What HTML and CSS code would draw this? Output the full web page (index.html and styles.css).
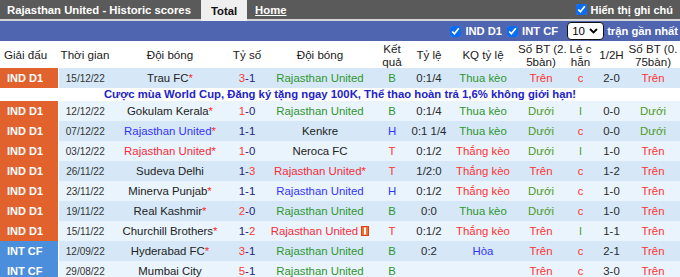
FILE: index.html
```html
<!DOCTYPE html>
<html lang="vi">
<head>
<meta charset="utf-8">
<title>Rajasthan United - Historic scores</title>
<link rel="stylesheet" href="styles.css">
</head>
<body>
<div class="topbar">
  <span class="title">Rajasthan United - Historic scores</span>
  <span class="tab tab-active">Total</span>
  <a class="tab tab-link" href="#">Home</a>
  <label class="note-toggle"><input class="chk" type="checkbox" checked>Hiển thị ghi chú</label>
</div>
<div class="filterbar">
  <label class="filter"><input class="chk" type="checkbox" checked>IND D1</label>
  <label class="filter"><input class="chk" type="checkbox" checked>INT CF</label>
  <span class="select-wrap">
    <select class="count"><option>10</option><option>20</option></select>
    <svg class="chevron" width="9" height="6" viewBox="0 0 9 6"><path d="M1 1 L4.5 4.5 L8 1" fill="none" stroke="#000" stroke-width="1.8"/></svg>
  </span>
  <span class="filter-text">trận gần nhất</span>
</div>
<table class="scores">
  <colgroup>
    <col class="w-league"><col class="w-date"><col class="w-home"><col class="w-score"><col class="w-away"><col class="w-res"><col class="w-odds"><col class="w-oddres"><col class="w-ou"><col class="w-oe"><col class="w-half"><col class="w-ou2">
  </colgroup>
  <thead>
    <tr>
      <th class="th-league">Giải đấu</th>
      <th>Thời gian</th>
      <th>Đội bóng</th>
      <th>Tỷ số</th>
      <th>Đội bóng</th>
      <th>Kết<br>quả</th>
      <th>Tỷ lệ</th>
      <th>KQ tỷ lệ</th>
      <th>Số BT (2.<br>5bàn)</th>
      <th>Lẻ c<br>hẵn</th>
      <th>1/2H</th>
      <th>Số BT (0.<br>75bàn)</th>
    </tr>
  </thead>
  <tbody>
    <tr class="row-a">
      <td class="lg ind">IND D1</td><td class="date">15/12/22</td>
      <td class="team">Trau FC<span class="star">*</span></td>
      <td class="score"><span class="win">3</span><span class="lose">-1</span></td>
      <td class="team green">Rajasthan United</td>
      <td class="green">B</td><td class="odds">0:1/4</td><td class="green">Thua kèo</td>
      <td class="red">Trên</td><td class="red">c</td><td class="half">2-0</td><td class="red">Trên</td>
    </tr>
    <tr class="ad">
      <td colspan="12"><a href="#">Cược mùa World Cup, Đăng ký tặng ngay 100K, Thể thao hoàn trả 1,6% không giới hạn!</a></td>
    </tr>
    <tr class="row-b">
      <td class="lg ind">IND D1</td><td class="date">12/12/22</td>
      <td class="team">Gokulam Kerala<span class="star">*</span></td>
      <td class="score"><span class="win">1</span><span class="lose">-0</span></td>
      <td class="team green">Rajasthan United</td>
      <td class="green">B</td><td class="odds">0:1/4</td><td class="green">Thua kèo</td>
      <td class="olive">Dưới</td><td class="olive">l</td><td class="half">0-0</td><td class="olive">Dưới</td>
    </tr>
    <tr class="row-a">
      <td class="lg ind">IND D1</td><td class="date">07/12/22</td>
      <td class="team blue">Rajasthan United<span class="star">*</span></td>
      <td class="score"><span class="lose">1-1</span></td>
      <td class="team">Kenkre</td>
      <td class="blue">H</td><td class="odds">0:1 1/4</td><td class="green">Thua kèo</td>
      <td class="olive">Dưới</td><td class="red">c</td><td class="half">0-0</td><td class="olive">Dưới</td>
    </tr>
    <tr class="row-b">
      <td class="lg ind">IND D1</td><td class="date">03/12/22</td>
      <td class="team red">Rajasthan United<span class="star">*</span></td>
      <td class="score"><span class="win">1</span><span class="lose">-0</span></td>
      <td class="team">Neroca FC</td>
      <td class="red">T</td><td class="odds">0:1/2</td><td class="red">Thắng kèo</td>
      <td class="olive">Dưới</td><td class="olive">l</td><td class="half">1-0</td><td class="red">Trên</td>
    </tr>
    <tr class="row-a">
      <td class="lg ind">IND D1</td><td class="date">26/11/22</td>
      <td class="team">Sudeva Delhi</td>
      <td class="score"><span class="lose">1-</span><span class="win">3</span></td>
      <td class="team red">Rajasthan United<span class="star">*</span></td>
      <td class="red">T</td><td class="odds">1/2:0</td><td class="red">Thắng kèo</td>
      <td class="red">Trên</td><td class="red">c</td><td class="half">1-2</td><td class="red">Trên</td>
    </tr>
    <tr class="row-b">
      <td class="lg ind">IND D1</td><td class="date">23/11/22</td>
      <td class="team">Minerva Punjab<span class="star">*</span></td>
      <td class="score"><span class="lose">1-1</span></td>
      <td class="team blue">Rajasthan United</td>
      <td class="blue">H</td><td class="odds">0:1/2</td><td class="red">Thắng kèo</td>
      <td class="olive">Dưới</td><td class="red">c</td><td class="half">1-0</td><td class="red">Trên</td>
    </tr>
    <tr class="row-a">
      <td class="lg ind">IND D1</td><td class="date">19/11/22</td>
      <td class="team">Real Kashmir<span class="star">*</span></td>
      <td class="score"><span class="win">2</span><span class="lose">-0</span></td>
      <td class="team green">Rajasthan United</td>
      <td class="green">B</td><td class="odds">0:0</td><td class="green">Thua kèo</td>
      <td class="olive">Dưới</td><td class="red">c</td><td class="half">1-0</td><td class="red">Trên</td>
    </tr>
    <tr class="row-b">
      <td class="lg ind">IND D1</td><td class="date">15/11/22</td>
      <td class="team">Churchill Brothers<span class="star">*</span></td>
      <td class="score"><span class="lose">1-</span><span class="win">2</span></td>
      <td class="team red">Rajasthan United <svg class="card" width="8" height="10" viewBox="0 0 8 10"><rect width="8" height="10" fill="#e2401a"/><rect x="1" y="1" width="6" height="8" fill="#f5702a"/><rect x="3" y="1.5" width="2" height="7" fill="#fff"/></svg></td>
      <td class="red">T</td><td class="odds">0:1/2</td><td class="red">Thắng kèo</td>
      <td class="red">Trên</td><td class="olive">l</td><td class="half">1-1</td><td class="red">Trên</td>
    </tr>
    <tr class="row-a">
      <td class="lg intl">INT CF</td><td class="date">12/09/22</td>
      <td class="team">Hyderabad FC<span class="star">*</span></td>
      <td class="score"><span class="win">3</span><span class="lose">-1</span></td>
      <td class="team green">Rajasthan United</td>
      <td class="green">B</td><td class="odds">0:2</td><td class="blue">Hòa</td>
      <td class="red">Trên</td><td class="red">c</td><td class="half">2-1</td><td class="red">Trên</td>
    </tr>
    <tr class="row-b">
      <td class="lg intl">INT CF</td><td class="date">29/08/22</td>
      <td class="team">Mumbai City</td>
      <td class="score"><span class="win">5</span><span class="lose">-1</span></td>
      <td class="team green">Rajasthan United</td>
      <td class="green">B</td><td class="odds"></td><td></td>
      <td class="red">Trên</td><td class="red">c</td><td class="half">3-0</td><td class="red">Trên</td>
    </tr>
  </tbody>
</table>
</body>
</html>
```

FILE: styles.css
```css
body {
  margin: 0;
  width: 680px;
  background: #ffffff;
  font-family: "Liberation Sans", Arial, sans-serif;
  color: #222222;
}

/* top bar */
.topbar {
  display: flex;
  align-items: stretch;
  height: 19px;
  background: #5a5a5a;
  border-bottom: 2px solid #d6d6d6;
  color: #ffffff;
  font-weight: bold;
  font-size: 11.3px;
}
.title {
  display: flex;
  align-items: center;
  padding: 0 10px 0 7px;
}
.tab {
  display: flex;
  align-items: center;
}
.tab-active {
  background: #efefef;
  color: #111111;
  padding: 0 10px;
  height: 21px;
}
.tab-link {
  color: #ffffff;
  text-decoration: underline;
  padding: 0 8px;
}
.note-toggle {
  margin-left: auto;
  display: flex;
  align-items: center;
  padding-right: 7px;
  font-size: 11px;
}

.chk {
  width: 11px;
  height: 11px;
  margin: 0 4px 0 0;
  accent-color: #0a6cf0;
}

/* filter bar */
.filterbar {
  display: flex;
  justify-content: flex-end;
  align-items: center;
  height: 20px;
  background: #5065b0;
  color: #ffffff;
  font-weight: bold;
  font-size: 11.2px;
  padding-right: 2px;
}
.filter {
  display: flex;
  align-items: center;
  margin-left: 5px;
}
.select-wrap {
  position: relative;
  display: inline-flex;
  margin-left: 9px;
  margin-right: 3px;
}
.count {
  appearance: none;
  -webkit-appearance: none;
  width: 37px;
  height: 18px;
  margin: 0;
  padding: 0 0 0 4px;
  border: 1.6px solid #111111;
  border-radius: 4px;
  background: #ffffff;
  color: #000000;
  font-family: "Liberation Sans", Arial, sans-serif;
  font-size: 11.5px;
}
.chevron {
  position: absolute;
  right: 6px;
  top: 6px;
  pointer-events: none;
}

/* table */
.scores {
  width: 680px;
  table-layout: fixed;
  border-collapse: collapse;
}
.w-league { width: 58px; }
.w-date { width: 54px; }
.w-home { width: 116px; }
.w-score { width: 38px; }
.w-away { width: 108px; }
.w-res { width: 36px; }
.w-odds { width: 38px; }
.w-oddres { width: 70px; }
.w-ou { width: 46px; }
.w-oe { width: 33px; }
.w-half { width: 29px; }
.w-ou2 { width: 54px; }

.scores th {
  height: 27px;
  padding: 0;
  font-weight: normal;
  font-size: 11.6px;
  line-height: 13px;
  color: #1a1a1a;
  text-align: center;
  white-space: nowrap;
}
.scores th.th-league {
  text-align: left;
  padding-left: 4px;
}
.scores td {
  height: 20px;
  padding: 0;
  font-size: 11.4px;
  text-align: center;
  white-space: nowrap;
  overflow: visible;
}
.row-a td { background: #d6e8f7; }
.row-b td { background: #eaf4fc; }

.scores td.lg {
  text-align: left;
  padding-left: 7px;
  color: #ffffff;
  font-weight: bold;
  font-size: 11px;
  border-right: 1px solid #ffffff;
}
.scores td.ind { background: #e1622d; }
.scores td.intl { background: #4b8edb; }

.scores td.date {
  font-size: 10px;
  color: #333333;
}
.team { color: #222222; }
.star { color: #ff2a2a; }
.score { color: #23237f; }
.win { color: #ff3a30; }
.lose { color: #23237f; }
.odds, .half { color: #2a2a2a; }

.green { color: #2f962f; }
.olive { color: #4f9a1f; }
.red { color: #ff3333; }
.scores td.team.red { color: #f52c3a; }
.blue { color: #3333ff; }

.card {
  vertical-align: -1px;
}

.ad td {
  height: 13px;
  background: #ffffff;
  text-align: center;
  line-height: 13px;
}
.ad a {
  color: #2323c8;
  font-weight: bold;
  font-size: 11.3px;
  text-decoration: none;
}
```
